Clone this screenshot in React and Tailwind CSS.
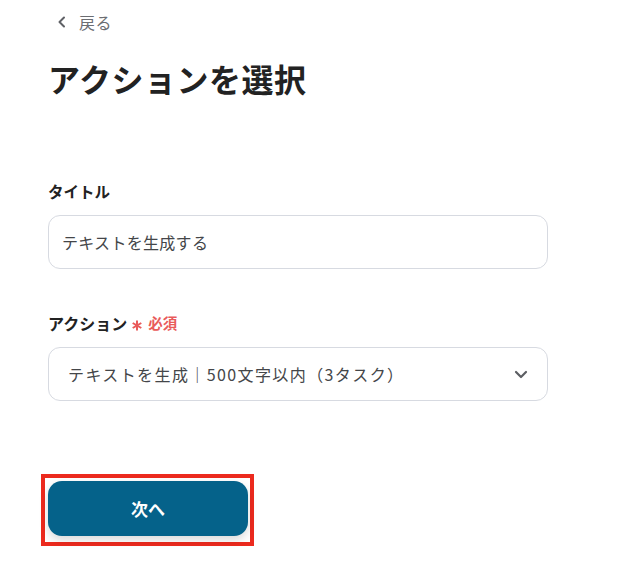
import React from "react";

export default function App() {
  return (
    <div
      className="w-[636px] h-[567px] bg-white overflow-hidden [text-spacing-trim:space-all]"
      style={{ fontFamily: '"Noto Sans CJK JP", "Noto Sans", sans-serif' }}
    >
      <div className="pl-[48px] pt-[10px] w-[548px] flex flex-col">
        <div className="flex items-center h-[24px] pl-[9px] gap-[13px] text-[#6b6d72]">
          <svg width="9" height="12" viewBox="0 0 9 12" fill="none">
            <path d="M7 1.5 L2.5 6 L7 10.5" stroke="#5f6166" strokeWidth="2" strokeLinecap="round" strokeLinejoin="round" />
          </svg>
          <span className="text-[16px] leading-[24px] tracking-[0.5px]">戻る</span>
        </div>
        <h1 className="mt-[24px] text-[32px] leading-[40px] font-bold text-[#222222] tracking-[0.5px]">
          アクションを選択
        </h1>
        <div className="mt-[82px] text-[15.5px] leading-[22px] font-bold text-[#222222]">タイトル</div>
        <div className="mt-[13px] h-[54px] rounded-[12px] border border-[#d7dae1] flex items-center px-[13px] text-[16px] text-[#444649] tracking-[0.3px]">
          テキストを生成する
        </div>
        <div className="mt-[43px] flex items-center h-[22px] gap-[5px]">
          <span className="text-[16px] leading-[22px] font-bold text-[#222222]">アクション</span>
          <span className="text-[#e95a5a] text-[14.5px] leading-[22px] font-bold flex items-center gap-[6px]">
            <svg width="10" height="11" viewBox="0 0 10 11" fill="none" className="mt-[4px]">
              <path d="M5 0.5 V10.5 M0.7 3 L9.3 8 M0.7 8 L9.3 3" stroke="#e95a5a" strokeWidth="2" />
            </svg>
            <span>必須</span>
          </span>
        </div>
        <div className="mt-[13px] h-[54px] rounded-[12px] border border-[#d7dae1] flex items-center justify-between pl-[19px] pr-[19px] text-[16px] text-[#444649]">
          <span className="tracking-[1.4px]">テキストを生成｜500文字以内（3タスク）</span>
          <svg width="14" height="9" viewBox="0 0 14 9" fill="none">
            <path d="M2 2 L7 7 L12 2" stroke="#5c5e63" strokeWidth="2.2" strokeLinecap="round" strokeLinejoin="round" />
          </svg>
        </div>
        <div className="mt-[73px] -ml-[7px] w-[213px] h-[72px] border-[4px] border-[#ec2a1e] pl-[3px] pt-[3px]">
          <button className="w-[200px] h-[55px] rounded-[14px] bg-[#05628a] text-white text-[17px] font-bold shadow-[0_4px_10px_rgba(0,0,0,0.15)] flex items-center justify-center">
            次へ
          </button>
        </div>
      </div>
    </div>
  );
}
